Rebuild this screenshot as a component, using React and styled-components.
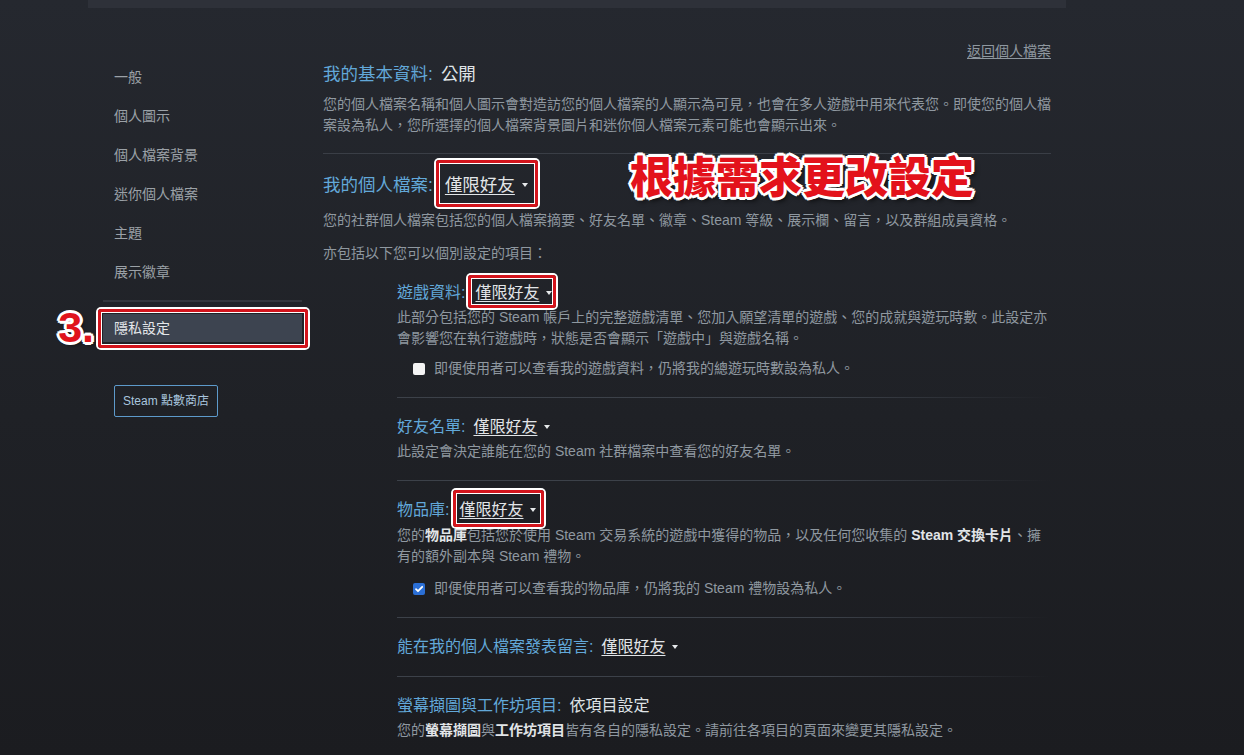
import React from 'react'
import styled, { createGlobalStyle, css } from 'styled-components'

const GlobalStyle = createGlobalStyle`
  html, body { margin: 0; padding: 0; }
  body {
    min-height: 755px;
    overflow: hidden;
    background: linear-gradient(180deg, #25282f 0%, #1f2126 55%, #1b1c20 100%);
    font-family: "Liberation Sans", "Noto Sans CJK TC", sans-serif;
  }
`

const Page = styled.div`
  width: 978px;
  margin-left: 88px;
`

const TopBar = styled.div`
  height: 8px;
  background: #2e3139;
`

const Layout = styled.div`
  display: flex;
  padding: 0 15px;
`

const Sidebar = styled.nav`
  width: 199px;
  flex-shrink: 0;
  padding-top: 50px;
  display: flex;
  flex-direction: column;
  align-items: flex-start;
`

const redBox = css`
  content: '';
  position: absolute;
  border: 3px solid #d3141c;
  border-radius: 3px;
  box-shadow: 0 0 0 2px #fff, inset 0 0 0 1px #fff;
  pointer-events: none;
`

const NavItem = styled.a`
  display: block;
  align-self: stretch;
  height: 39px;
  line-height: 39px;
  padding-left: 11px;
  font-size: 14px;
  color: #9ba1a7;
  text-decoration: none;

  ${p => p.$active && css`
    position: relative;
    height: 28px;
    line-height: 28px;
    margin-top: 12px;
    background: #3d4450;
    color: #e4e7ea;
    &::after {
      ${redBox}
      inset: -5px -6px -6px -5px;
    }
  `}
`

const StepLabel = styled.span`
  position: absolute;
  right: calc(100% + 9px);
  top: 50%;
  transform: translateY(-52%);
  font-family: "Liberation Sans", sans-serif;
  font-size: 43px;
  font-weight: 700;
  line-height: 1;
  color: #e0141c;
  text-shadow:
    3px 0 0 #fff, -3px 0 0 #fff, 0 3px 0 #fff, 0 -3px 0 #fff,
    2px 2px 0 #fff, -2px 2px 0 #fff, 2px -2px 0 #fff, -2px -2px 0 #fff,
    3px 3px 4px rgba(0, 0, 0, 0.6);
`

const NavDivider = styled.div`
  align-self: stretch;
  height: 2px;
  margin-top: 8px;
  background: #33363d;
`

const StoreButton = styled.a`
  display: block;
  margin: 43px 0 0 11px;
  height: 32px;
  box-sizing: border-box;
  padding: 0 8px;
  border: 1px solid #5d9acb;
  border-radius: 2px;
  line-height: 30px;
  font-size: 12px;
  color: #a9c6df;
  text-decoration: none;
`

const Main = styled.main`
  position: relative;
  width: 728px;
  margin-left: 21px;
`

const BackLink = styled.a`
  display: block;
  margin-top: 34px;
  text-align: right;
  font-size: 14px;
  line-height: 18px;
  color: #8f98a0;
  text-decoration: underline;
  text-underline-offset: 2px;
`

const Heading = styled.h2`
  margin: ${p => p.$mt || 0}px 0 0;
  font-weight: 400;
  font-size: ${p => (p.$small ? 16 : 17.5)}px;
  line-height: ${p => (p.$small ? 22 : 24)}px;
  color: #62a8d9;
  white-space: nowrap;
`

const Value = styled.span`
  margin-left: 8px;
  color: #dfe3e6;
`

const Select = styled.span`
  position: relative;
  display: inline-flex;
  align-items: center;
  margin-left: ${p => p.$gap}px;
  color: #e2e5e8;

  ${p => p.$box && css`
    &::after {
      ${redBox}
      inset: ${p.$box};
    }
  `}
`

const SelectText = styled.span`
  text-decoration: underline;
  text-decoration-thickness: 1px;
  text-underline-offset: 3px;
`

const Caret = styled.span`
  width: 0;
  height: 0;
  margin-left: 7px;
  border-left: 3.5px solid transparent;
  border-right: 3.5px solid transparent;
  border-top: 4px solid #e6e9eb;
`

const Desc = styled.p`
  margin: ${p => p.$mt || 0}px 0 0;
  font-size: 14px;
  line-height: 21px;
  color: #8f98a0;
`

const Strong = styled.b`
  font-weight: 700;
  color: #e2e5e8;
`

const MainDivider = styled.div`
  height: 1px;
  margin-top: 17.5px;
  background: #3a3e46;
`

const SubSection = styled.section`
  margin-left: 74px;
  padding: 18px 0 ${p => (p.$last ? 0 : 19)}px;
  background: ${p => (p.$last ? 'none' : css`linear-gradient(90deg, #3c4149 0%, #3c4149 65%, rgba(60, 65, 73, 0) 100%) bottom / 100% 1px no-repeat`)};
`

const CheckRow = styled.label`
  display: flex;
  align-items: center;
  gap: 9px;
  margin: ${p => p.$mt || 0}px 0 0 16px;
  font-size: 14px;
  line-height: 21px;
  color: #8f98a0;
`

const CheckBox = styled.span`
  display: inline-flex;
  align-items: center;
  justify-content: center;
  width: 12px;
  height: 12px;
  border-radius: 2px;
  background: ${p => (p.$checked ? '#2b6fd6' : '#f4f4f4')};
`

const Callout = styled.div`
  position: absolute;
  left: 307px;
  top: 145px;
  font-family: "Noto Sans CJK TC", sans-serif;
  font-size: 43px;
  font-weight: 900;
  line-height: 1;
  color: #e3121b;
  white-space: nowrap;
  text-shadow:
    3px 0 0 #fff, -3px 0 0 #fff, 0 3px 0 #fff, 0 -3px 0 #fff,
    2px 2px 0 #fff, -2px 2px 0 #fff, 2px -2px 0 #fff, -2px -2px 0 #fff,
    3px 4px 5px rgba(0, 0, 0, 0.7);
`

const Dropdown = ({ box, gap = 8, children }) => (
  <Select $box={box} $gap={gap}>
    <SelectText>{children}</SelectText>
    <Caret />
  </Select>
)

const Check = ({ checked, children, mt }) => (
  <CheckRow $mt={mt}>
    <CheckBox $checked={checked}>
      {checked && (
        <svg width="10" height="10" viewBox="0 0 10 10">
          <path d="M2 5.2l2 2L8.2 2.8" fill="none" stroke="#fff" strokeWidth="1.8" strokeLinecap="round" strokeLinejoin="round" />
        </svg>
      )}
    </CheckBox>
    {children}
  </CheckRow>
)

const navItems = ['一般', '個人圖示', '個人檔案背景', '迷你個人檔案', '主題', '展示徽章']

export default function App() {
  return (
    <>
      <GlobalStyle />
      <Page>
        <TopBar />
        <Layout>
          <Sidebar>
            {navItems.map(item => (
              <NavItem key={item}>{item}</NavItem>
            ))}
            <NavDivider />
            <NavItem $active>
              <StepLabel>3.</StepLabel>
              隱私設定
            </NavItem>
            <StoreButton>Steam 點數商店</StoreButton>
          </Sidebar>

          <Main>
            <BackLink>返回個人檔案</BackLink>
            <Heading $mt={2}>
              我的基本資料:<Value>公開</Value>
            </Heading>
            <Desc $mt={7.5}>
              您的個人檔案名稱和個人圖示會對造訪您的個人檔案的人顯示為可見，也會在多人遊戲中用來代表您。即使您的個人檔案設為私人，您所選擇的個人檔案背景圖片和迷你個人檔案元素可能也會顯示出來。
            </Desc>
            <MainDivider />
            <Heading $mt={19}>
              我的個人檔案:<Dropdown gap={12} box="-13px -10px -10px -9px">僅限好友</Dropdown>
            </Heading>
            <Desc $mt={12.5}>
              您的社群個人檔案包括您的個人檔案摘要、好友名單、徽章、Steam 等級、展示欄、留言，以及群組成員資格。
            </Desc>
            <Desc $mt={12}>亦包括以下您可以個別設定的項目：</Desc>

            <SubSection>
              <Heading $small>
                遊戲資料:<Dropdown gap={10} box="-7px -4px -4px -7px">僅限好友</Dropdown>
              </Heading>
              <Desc $mt={3.5}>
                此部分包括您的 Steam 帳戶上的完整遊戲清單、您加入願望清單的遊戲、您的成就與遊玩時數。此設定亦會影響您在執行遊戲時，狀態是否會顯示「遊戲中」與遊戲名稱。
              </Desc>
              <Check mt={9}>即便使用者可以查看我的遊戲資料，仍將我的總遊玩時數設為私人。</Check>
            </SubSection>

            <SubSection>
              <Heading $small>
                好友名單:<Dropdown>僅限好友</Dropdown>
              </Heading>
              <Desc $mt={3}>此設定會決定誰能在您的 Steam 社群檔案中查看您的好友名單。</Desc>
            </SubSection>

            <SubSection>
              <Heading $small>
                物品庫:<Dropdown gap={10} box="-9px -8px -6px -6px">僅限好友</Dropdown>
              </Heading>
              <Desc $mt={4}>
                您的<Strong>物品庫</Strong>包括您於使用 Steam 交易系統的遊戲中獲得的物品，以及任何您收集的 <Strong>Steam 交換卡片</Strong>、擁有的額外副本與 Steam 禮物。
              </Desc>
              <Check checked mt={11}>即便使用者可以查看我的物品庫，仍將我的 Steam 禮物設為私人。</Check>
            </SubSection>

            <SubSection>
              <Heading $small>
                能在我的個人檔案發表留言:<Dropdown>僅限好友</Dropdown>
              </Heading>
            </SubSection>

            <SubSection $last>
              <Heading $small>
                螢幕擷圖與工作坊項目:<Value>依項目設定</Value>
              </Heading>
              <Desc $mt={3}>
                您的<Strong>螢幕擷圖</Strong>與<Strong>工作坊項目</Strong>皆有各自的隱私設定。請前往各項目的頁面來變更其隱私設定。
              </Desc>
            </SubSection>

            <Callout>根據需求更改設定</Callout>
          </Main>
        </Layout>
      </Page>
    </>
  )
}
